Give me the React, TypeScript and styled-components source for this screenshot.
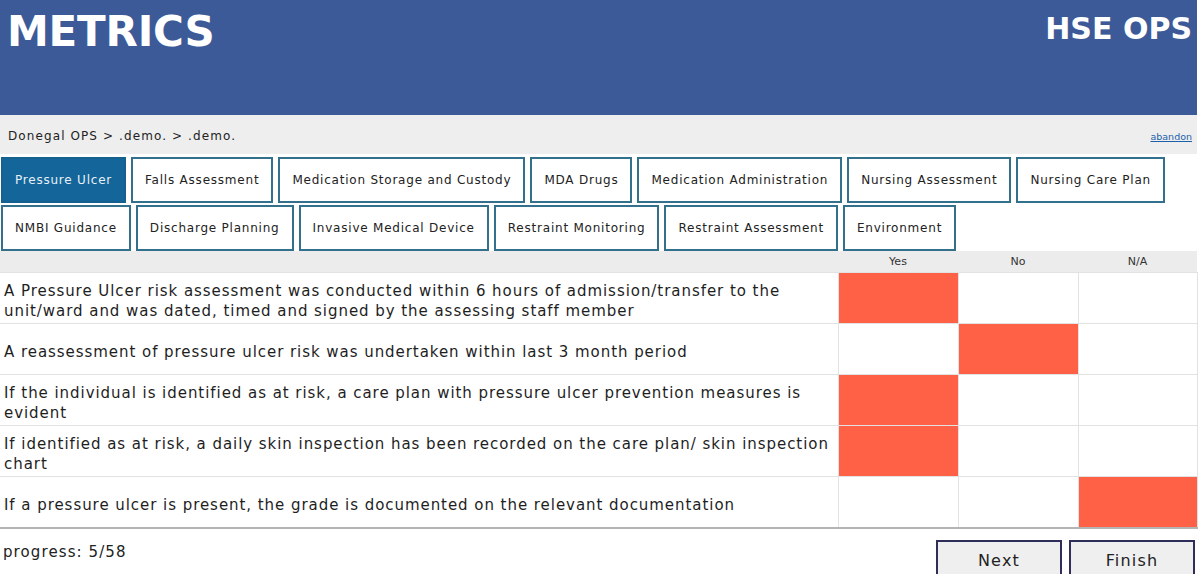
import React from 'react'
import styled, { createGlobalStyle } from 'styled-components'

const GlobalStyle = createGlobalStyle`
  html, body {
    margin: 0;
    padding: 0;
    background: #fff;
  }
  body {
    font-family: 'DejaVu Sans', Verdana, sans-serif;
    color: #222;
  }
`

const Page = styled.div`
  width: 1197px;
`

const Header = styled.div`
  height: 115px;
  background: #3c5a98;
  display: flex;
  justify-content: space-between;
  align-items: flex-start;
  padding: 0 5px 0 7px;
  box-sizing: border-box;
  color: #fff;
  font-weight: bold;
`

const Title = styled.h1`
  margin: 8px 0 0;
  font-size: 42px;
  letter-spacing: -0.2px;
  line-height: 48px;
`

const Brand = styled.div`
  margin-top: 12px;
  font-size: 30px;
  line-height: 34px;
`

const CrumbBar = styled.div`
  height: 39px;
  background: #eeeeee;
  display: flex;
  justify-content: space-between;
  align-items: center;
  padding: 3px 5px 0 8px;
  box-sizing: border-box;
  font-size: 12px;
  letter-spacing: 1.1px;
`

const AbandonLink = styled.a`
  color: #1d5fa8;
  text-decoration: underline;
  font-size: 9.5px;
  letter-spacing: 0;
`

const TabBar = styled.div`
  display: flex;
  flex-wrap: wrap;
  gap: 2px 5px;
  padding: 3px 0 0 1px;
  width: 1185px;
`

const Tab = styled.div<{ $active?: boolean }>`
  height: 46px;
  box-sizing: border-box;
  display: flex;
  align-items: center;
  padding: 0 12px;
  border: 2px solid ${(p) => (p.$active ? '#14608f' : '#33708c')};
  background: ${(p) => (p.$active ? '#14659a' : '#fff')};
  color: ${(p) => (p.$active ? '#e8f0f6' : '#222')};
  font-size: 12px;
  letter-spacing: 0.78px;
  white-space: nowrap;
`

const Grid = styled.table`
  width: 1197px;
  border-collapse: collapse;
  table-layout: fixed;
  border-bottom: 2px solid #b4b4b4;
`

const HeadCell = styled.th`
  height: 21px;
  background: #ececec;
  font-size: 11px;
  font-weight: normal;
  color: #333;
  text-align: center;
  padding: 0;
`

const QuestionCell = styled.td`
  height: 45px;
  padding: 5px 0 0 4px;
  font-size: 15px;
  letter-spacing: 0.95px;
  line-height: 20px;
  color: #1e1e1e;
  border-top: 1px solid #e2e2e2;
  vertical-align: middle;
`

const AnswerCell = styled.td<{ $on?: boolean }>`
  padding: 0;
  border: 1px solid #e2e2e2;
  background: ${(p) => (p.$on ? '#fe6145' : '#fff')};
`

const Footer = styled.div`
  display: flex;
  justify-content: space-between;
  align-items: flex-start;
  padding-top: 11px;
`

const Progress = styled.div`
  font-size: 15px;
  letter-spacing: 1.1px;
  padding: 3px 0 0 3px;
`

const Buttons = styled.div`
  display: flex;
  gap: 7px;
  padding-right: 2px;
`

const Button = styled.button`
  width: 126px;
  height: 40px;
  background: #efefef;
  border: 2px solid #2e2e58;
  font-family: 'DejaVu Sans', Verdana, sans-serif;
  font-size: 16px;
  letter-spacing: 1.2px;
  color: #222;
  padding: 0;
`

const tabs = [
  'Pressure Ulcer',
  'Falls Assessment',
  'Medication Storage and Custody',
  'MDA Drugs',
  'Medication Administration',
  'Nursing Assessment',
  'Nursing Care Plan',
  'NMBI Guidance',
  'Discharge Planning',
  'Invasive Medical Device',
  'Restraint Monitoring',
  'Restraint Assessment',
  'Environment',
]

const questions: { text: string; answer: number }[] = [
  {
    text: 'A Pressure Ulcer risk assessment was conducted within 6 hours of admission/transfer to the unit/ward and was dated, timed and signed by the assessing staff member',
    answer: 0,
  },
  { text: 'A reassessment of pressure ulcer risk was undertaken within last 3 month period', answer: 1 },
  {
    text: 'If the individual is identified as at risk, a care plan with pressure ulcer prevention measures is evident',
    answer: 0,
  },
  {
    text: 'If identified as at risk, a daily skin inspection has been recorded on the care plan/ skin inspection chart',
    answer: 0,
  },
  { text: 'If a pressure ulcer is present, the grade is documented on the relevant documentation', answer: 2 },
]

export default function App() {
  return (
    <Page>
      <GlobalStyle />
      <Header>
        <Title>METRICS</Title>
        <Brand>HSE OPS</Brand>
      </Header>
      <CrumbBar>
        <span>Donegal OPS &gt; .demo. &gt; .demo.</span>
        <AbandonLink href="#">abandon</AbandonLink>
      </CrumbBar>
      <TabBar>
        {tabs.map((t, i) => (
          <Tab key={t} $active={i === 0}>
            {t}
          </Tab>
        ))}
      </TabBar>
      <Grid>
        <colgroup>
          <col style={{ width: 838 }} />
          <col style={{ width: 120 }} />
          <col style={{ width: 120 }} />
          <col style={{ width: 119 }} />
        </colgroup>
        <thead>
          <tr>
            <HeadCell />
            <HeadCell>Yes</HeadCell>
            <HeadCell>No</HeadCell>
            <HeadCell>N/A</HeadCell>
          </tr>
        </thead>
        <tbody>
          {questions.map((q) => (
            <tr key={q.text}>
              <QuestionCell>{q.text}</QuestionCell>
              {[0, 1, 2].map((c) => (
                <AnswerCell key={c} $on={q.answer === c} />
              ))}
            </tr>
          ))}
        </tbody>
      </Grid>
      <Footer>
        <Progress>progress: 5/58</Progress>
        <Buttons>
          <Button>Next</Button>
          <Button>Finish</Button>
        </Buttons>
      </Footer>
    </Page>
  )
}
